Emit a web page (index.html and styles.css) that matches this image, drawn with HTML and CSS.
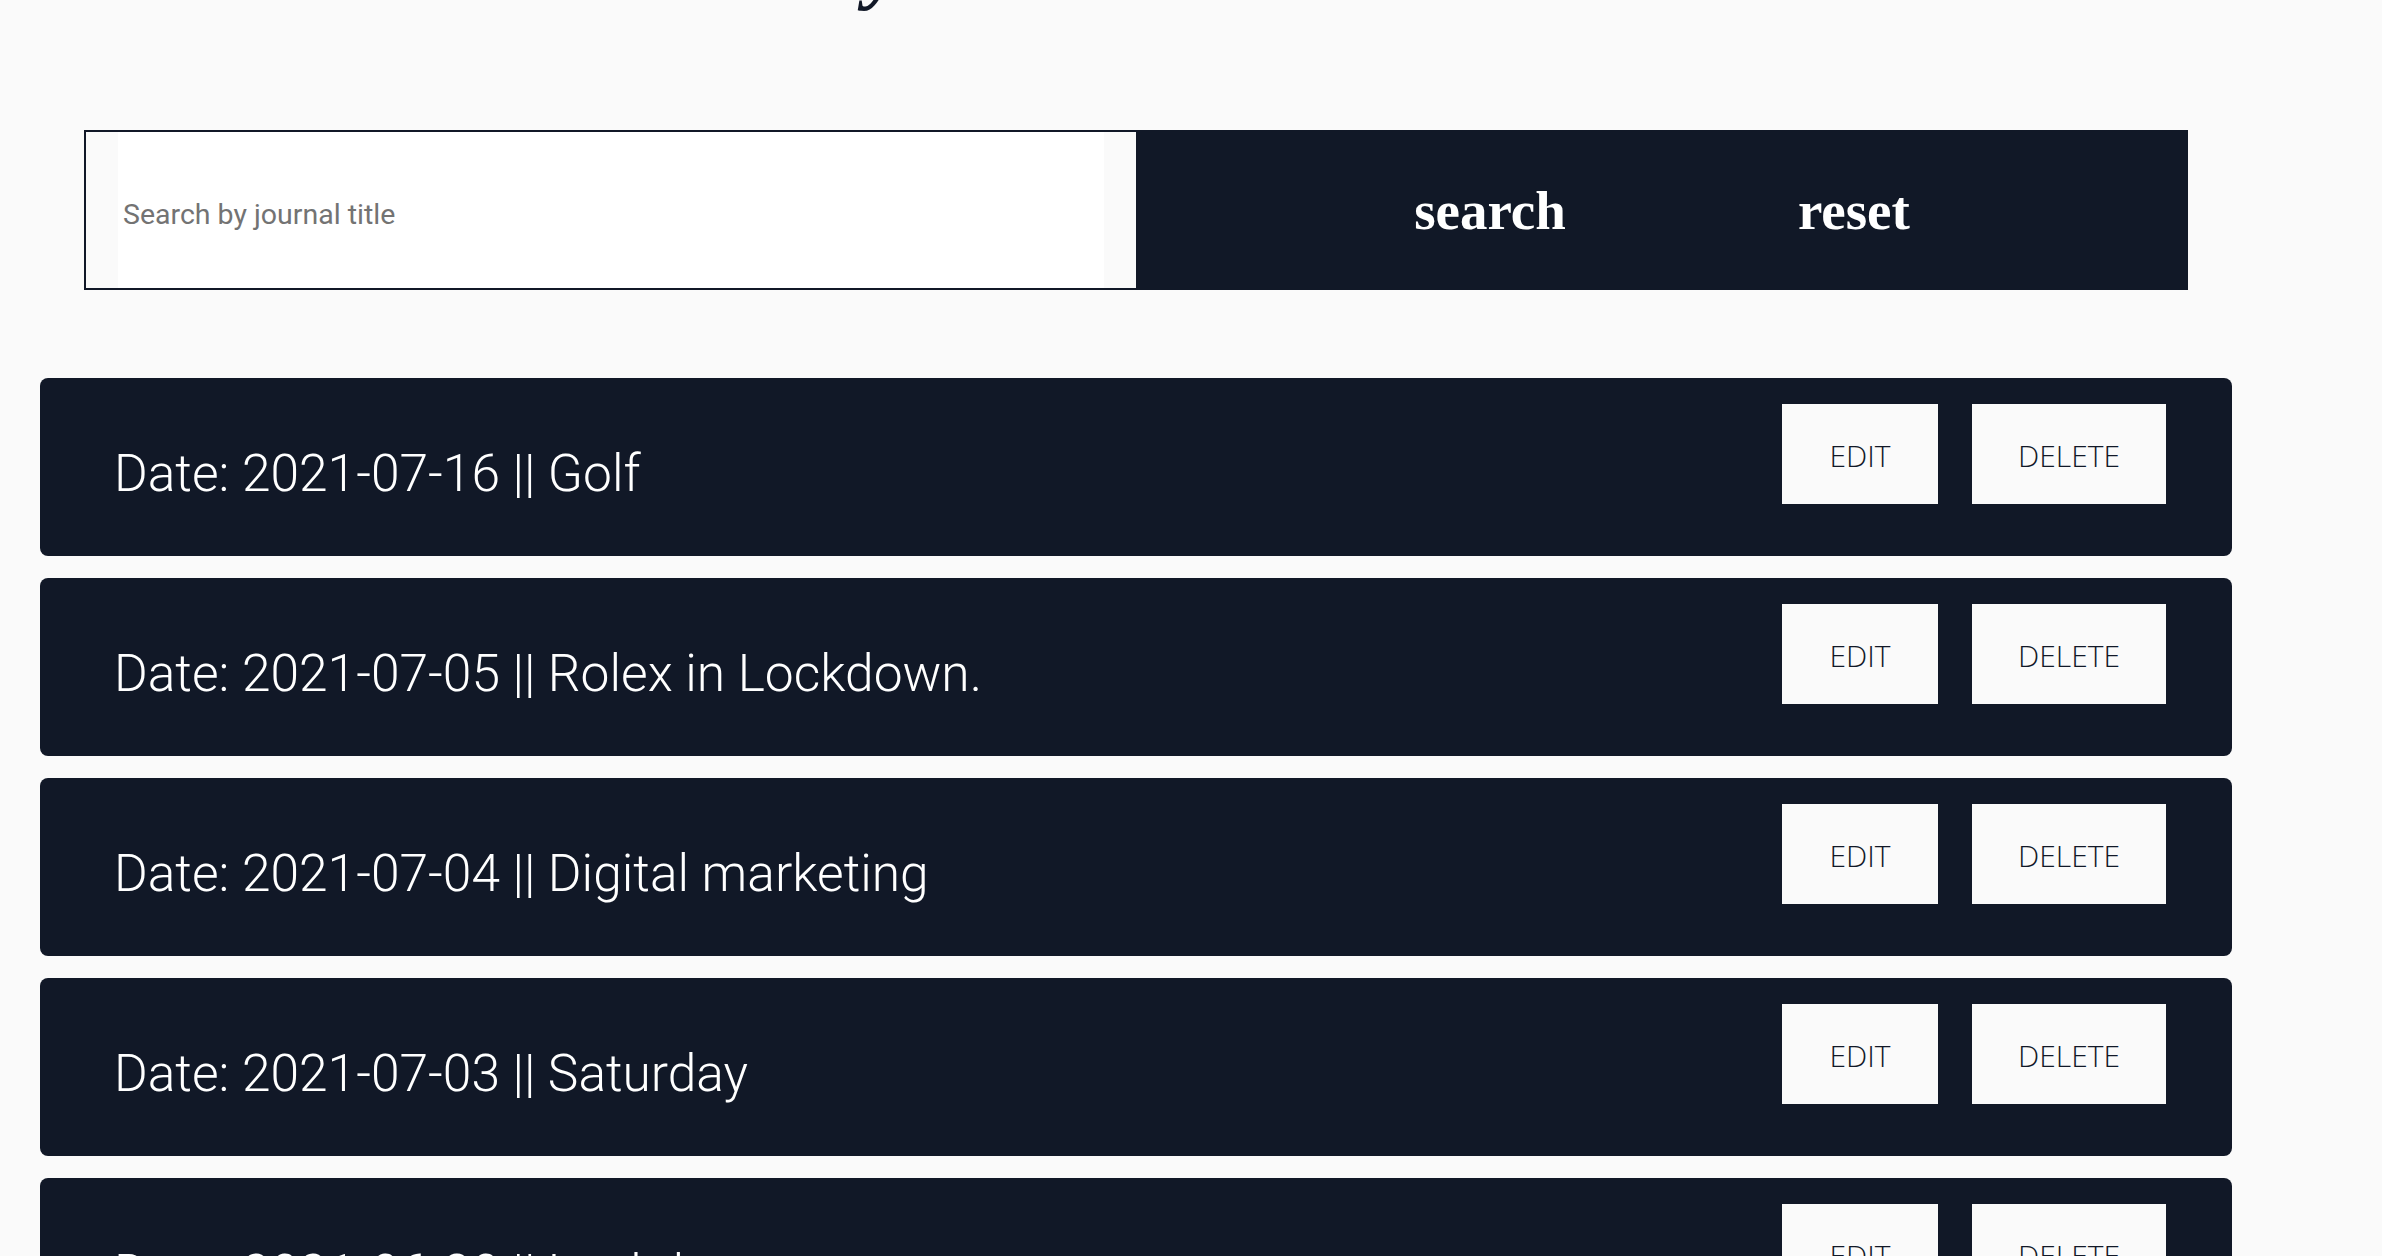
FILE: index.html
```html
<!DOCTYPE html>
<html lang="en">
<head>
<meta charset="utf-8">
<title>Journal</title>
<link rel="stylesheet" href="styles.css">
</head>
<body>
<main class="page">
  <h1 class="title">My Entries</h1>
  <form class="search">
    <div class="search-field">
      <input class="search-input" type="text" placeholder="Search by journal title">
    </div>
    <div class="search-actions">
      <button class="search-btn" type="button">search</button>
      <button class="search-btn" type="button">reset</button>
    </div>
  </form>
  <ul class="entries">
    <li class="entry">
      <h2 class="entry-title">Date: 2021-07-16 || Golf</h2>
      <div class="entry-actions"><button class="entry-btn" type="button">EDIT</button><button class="entry-btn" type="button">DELETE</button></div>
    </li>
    <li class="entry">
      <h2 class="entry-title">Date: 2021-07-05 || Rolex in Lockdown.</h2>
      <div class="entry-actions"><button class="entry-btn" type="button">EDIT</button><button class="entry-btn" type="button">DELETE</button></div>
    </li>
    <li class="entry">
      <h2 class="entry-title">Date: 2021-07-04 || Digital marketing</h2>
      <div class="entry-actions"><button class="entry-btn" type="button">EDIT</button><button class="entry-btn" type="button">DELETE</button></div>
    </li>
    <li class="entry">
      <h2 class="entry-title">Date: 2021-07-03 || Saturday</h2>
      <div class="entry-actions"><button class="entry-btn" type="button">EDIT</button><button class="entry-btn" type="button">DELETE</button></div>
    </li>
    <li class="entry">
      <h2 class="entry-title">Date: 2021-06-30 || Lockdown</h2>
      <div class="entry-actions"><button class="entry-btn" type="button">EDIT</button><button class="entry-btn" type="button">DELETE</button></div>
    </li>
  </ul>
</main>
</body>
</html>
```
FILE: styles.css
```css
*, *::before, *::after {
  box-sizing: border-box;
}
html, body {
  margin: 0;
  padding: 0;
  background: #fafafa;
}
body {
  overflow: hidden;
  height: 1256px;
}
.page {
  width: 2232px;
  padding-left: 40px;
}
.title {
  margin: -73px 0 0 0;
  height: 80px;
  font-family: "Liberation Serif", serif;
  font-style: italic;
  font-weight: 700;
  font-size: 80px;
  line-height: 1;
  text-align: center;
  color: #111827;
  padding-right: 316px;
}
.search {
  display: flex;
  margin: 123px 44px 0 44px;
  height: 160px;
}
.search-field {
  flex: 0 0 50%;
  display: flex;
  border: 2px solid #111827;
  border-right: 0;
  padding: 0 32px;
  background: #fafafa;
}
.search-input {
  flex: 1;
  min-width: 0;
  border: 0;
  outline: none;
  background: #ffffff;
  padding: 9px 0 0 5px;
  margin: 0;
  font-family: Roboto, "Liberation Sans", sans-serif;
  font-size: 28.5px;
  color: #111827;
}
.search-input::placeholder {
  color: #737373;
}
.search-actions {
  flex: 0 0 50%;
  background: #111827;
  display: flex;
  justify-content: center;
  align-items: center;
  gap: 232px;
}
.search-btn {
  background: transparent;
  border: 0;
  padding: 0;
  color: #ffffff;
  font-family: "Liberation Serif", serif;
  font-weight: 700;
  font-size: 55px;
  line-height: 1;
}
.entries {
  list-style: none;
  margin: 88px 0 0 0;
  padding: 0;
  display: flex;
  flex-direction: column;
  gap: 22px;
}
.entry {
  height: 178px;
  background: #111827;
  border-radius: 8px;
  display: flex;
  justify-content: space-between;
  align-items: flex-start;
  padding: 0 66px 0 74px;
}
.entry-title {
  margin: 70px 0 0 0;
  font-family: Roboto, "Liberation Sans", sans-serif;
  font-weight: 300;
  font-size: 51.5px;
  line-height: 1;
  color: #ffffff;
}
.entry-actions {
  display: flex;
  gap: 34px;
  margin-top: 26px;
}
.entry-btn {
  height: 100px;
  min-width: 156px;
  padding: 3px 46px 0 46px;
  border: 0;
  border-radius: 0;
  background: #fafafa;
  color: #111827;
  font-family: "Open Sans", sans-serif;
  font-weight: 300;
  font-size: 30px;
}
```
